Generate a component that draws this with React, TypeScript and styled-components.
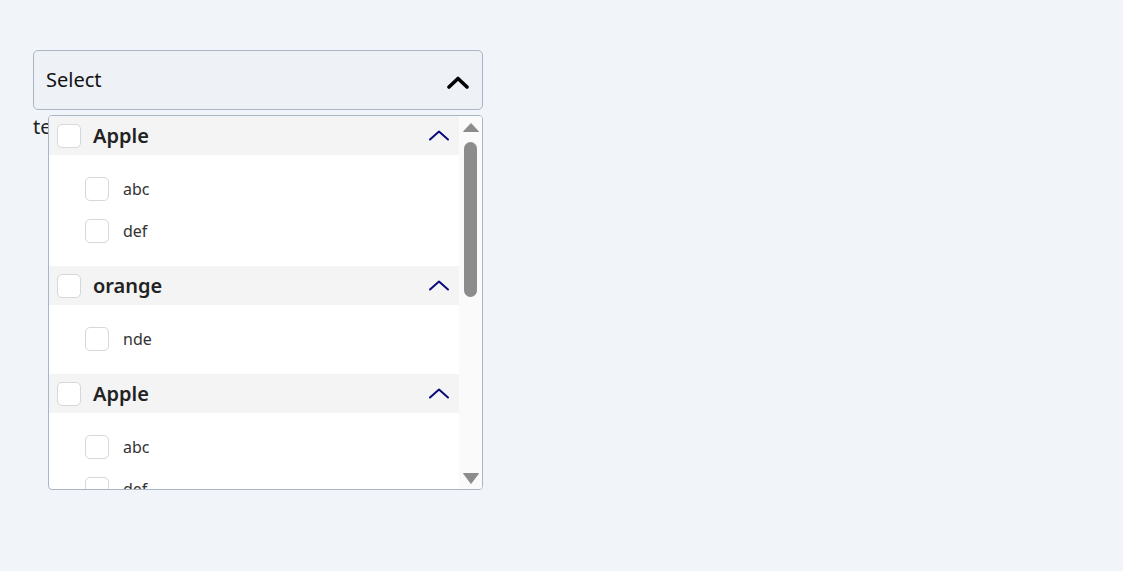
import styled, { createGlobalStyle } from 'styled-components';

type Group = { label: string; items: string[] };

const groups: Group[] = [
    { label: 'Apple', items: ['abc', 'def'] },
    { label: 'orange', items: ['nde'] },
    { label: 'Apple', items: ['abc', 'def'] },
];

function App() {
    return (
        <>
            <GlobalStyle />
            <StyledPage>
                <StyledField>
                    <StyledSelect>
                        <span>Select</span>
                        <svg width="24" height="14" viewBox="0 0 24 14">
                            <polyline points="3,12 12,3.5 21,12" fill="none" stroke="#000" strokeWidth="3.6" strokeLinecap="round" strokeLinejoin="round" />
                        </svg>
                    </StyledSelect>
                    <StyledCaption>text</StyledCaption>

                    <StyledDropdown>
                        <StyledList>
                            {groups.map((group, i) => (
                                <div key={i}>
                                    <StyledGroupHead>
                                        <StyledCheckbox />
                                        <StyledGroupLabel>{group.label}</StyledGroupLabel>
                                        <svg width="22" height="12" viewBox="0 0 22 12">
                                            <polyline points="2,10.5 11,2.5 20,10.5" fill="none" stroke="#0b0b7a" strokeWidth="2" strokeLinecap="round" strokeLinejoin="round" />
                                        </svg>
                                    </StyledGroupHead>
                                    <StyledItems>
                                        {group.items.map((item) => (
                                            <StyledItem key={item}>
                                                <StyledCheckbox />
                                                <span>{item}</span>
                                            </StyledItem>
                                        ))}
                                    </StyledItems>
                                </div>
                            ))}
                        </StyledList>

                        <StyledScrollbar>
                            <StyledScrollBtn>
                                <svg width="16" height="9" viewBox="0 0 16 9">
                                    <polygon points="0.5,8.5 8,0.5 15.5,8.5" fill="#8c8c8c" stroke="#8c8c8c" strokeWidth="1" strokeLinejoin="round" />
                                </svg>
                            </StyledScrollBtn>
                            <StyledTrack>
                                <StyledThumb />
                            </StyledTrack>
                            <StyledScrollBtn>
                                <svg width="16" height="11" viewBox="0 0 16 11">
                                    <polygon points="0.5,0.5 8,10.5 15.5,0.5" fill="#8c8c8c" stroke="#8c8c8c" strokeWidth="1" strokeLinejoin="round" />
                                </svg>
                            </StyledScrollBtn>
                        </StyledScrollbar>
                    </StyledDropdown>
                </StyledField>
            </StyledPage>
        </>
    );
}

export default App;

const GlobalStyle = createGlobalStyle`
    html, body {
        margin: 0;
        background: #f1f4f8;
        font-family: "Noto Sans", "Open Sans", sans-serif;
    }
`

const StyledPage = styled.div`
    padding: 50px 0 0 33px;
    min-height: 521px;
`

const StyledField = styled.div`
    position: relative;
    width: 450px;
`

const StyledSelect = styled.div`
    box-sizing: border-box;
    height: 60px;
    display: flex;
    align-items: center;
    justify-content: space-between;
    padding: 0 12px 0 12px;
    border: 1px solid #aab5c6;
    border-radius: 5px;
    background: #eef1f6;
    font-size: 20px;
    color: #111;

    span {
        margin-top: -2px;
    }

    svg {
        margin-top: 4px;
    }
`

const StyledCaption = styled.div`
    margin-top: 3px;
    font-size: 20px;
    color: #222;
`

const StyledDropdown = styled.div`
    position: absolute;
    top: 65px;
    left: 15px;
    box-sizing: border-box;
    width: 435px;
    height: 375px;
    display: flex;
    border: 1px solid #aab5c6;
    border-radius: 4px;
    background: #fff;
    overflow: hidden;
`

const StyledList = styled.div`
    flex: 1;
    min-width: 0;
    overflow: hidden;
`

const StyledScrollbar = styled.div`
    flex: none;
    width: 23px;
    display: flex;
    flex-direction: column;
    background: #fafafa;
`

const StyledScrollBtn = styled.div`
    height: 22px;
    display: flex;
    align-items: center;
    justify-content: center;
    padding-left: 1px;
`

const StyledTrack = styled.div`
    flex: 1;
    padding: 4px 5px;
`

const StyledThumb = styled.div`
    height: 155px;
    border-radius: 7px;
    background: #8c8c8c;
`

const StyledGroupHead = styled.div`
    height: 39px;
    display: flex;
    align-items: center;
    gap: 12px;
    padding: 0 9px 0 8px;
    background: #f4f4f4;

    svg {
        margin-left: auto;
        margin-top: -2px;
    }
`

const StyledGroupLabel = styled.span`
    font-size: 20px;
    font-weight: 600;
    color: #222;
`

const StyledCheckbox = styled.span`
    box-sizing: border-box;
    flex: none;
    width: 24px;
    height: 24px;
    border: 1px solid #d5d7db;
    border-radius: 5px;
    background: #fff;
`

const StyledItems = styled.div`
    padding: 13px 0 14px 36px;
`

const StyledItem = styled.div`
    height: 42px;
    display: flex;
    align-items: center;
    gap: 14px;
    font-size: 16px;
    color: #333;
`
